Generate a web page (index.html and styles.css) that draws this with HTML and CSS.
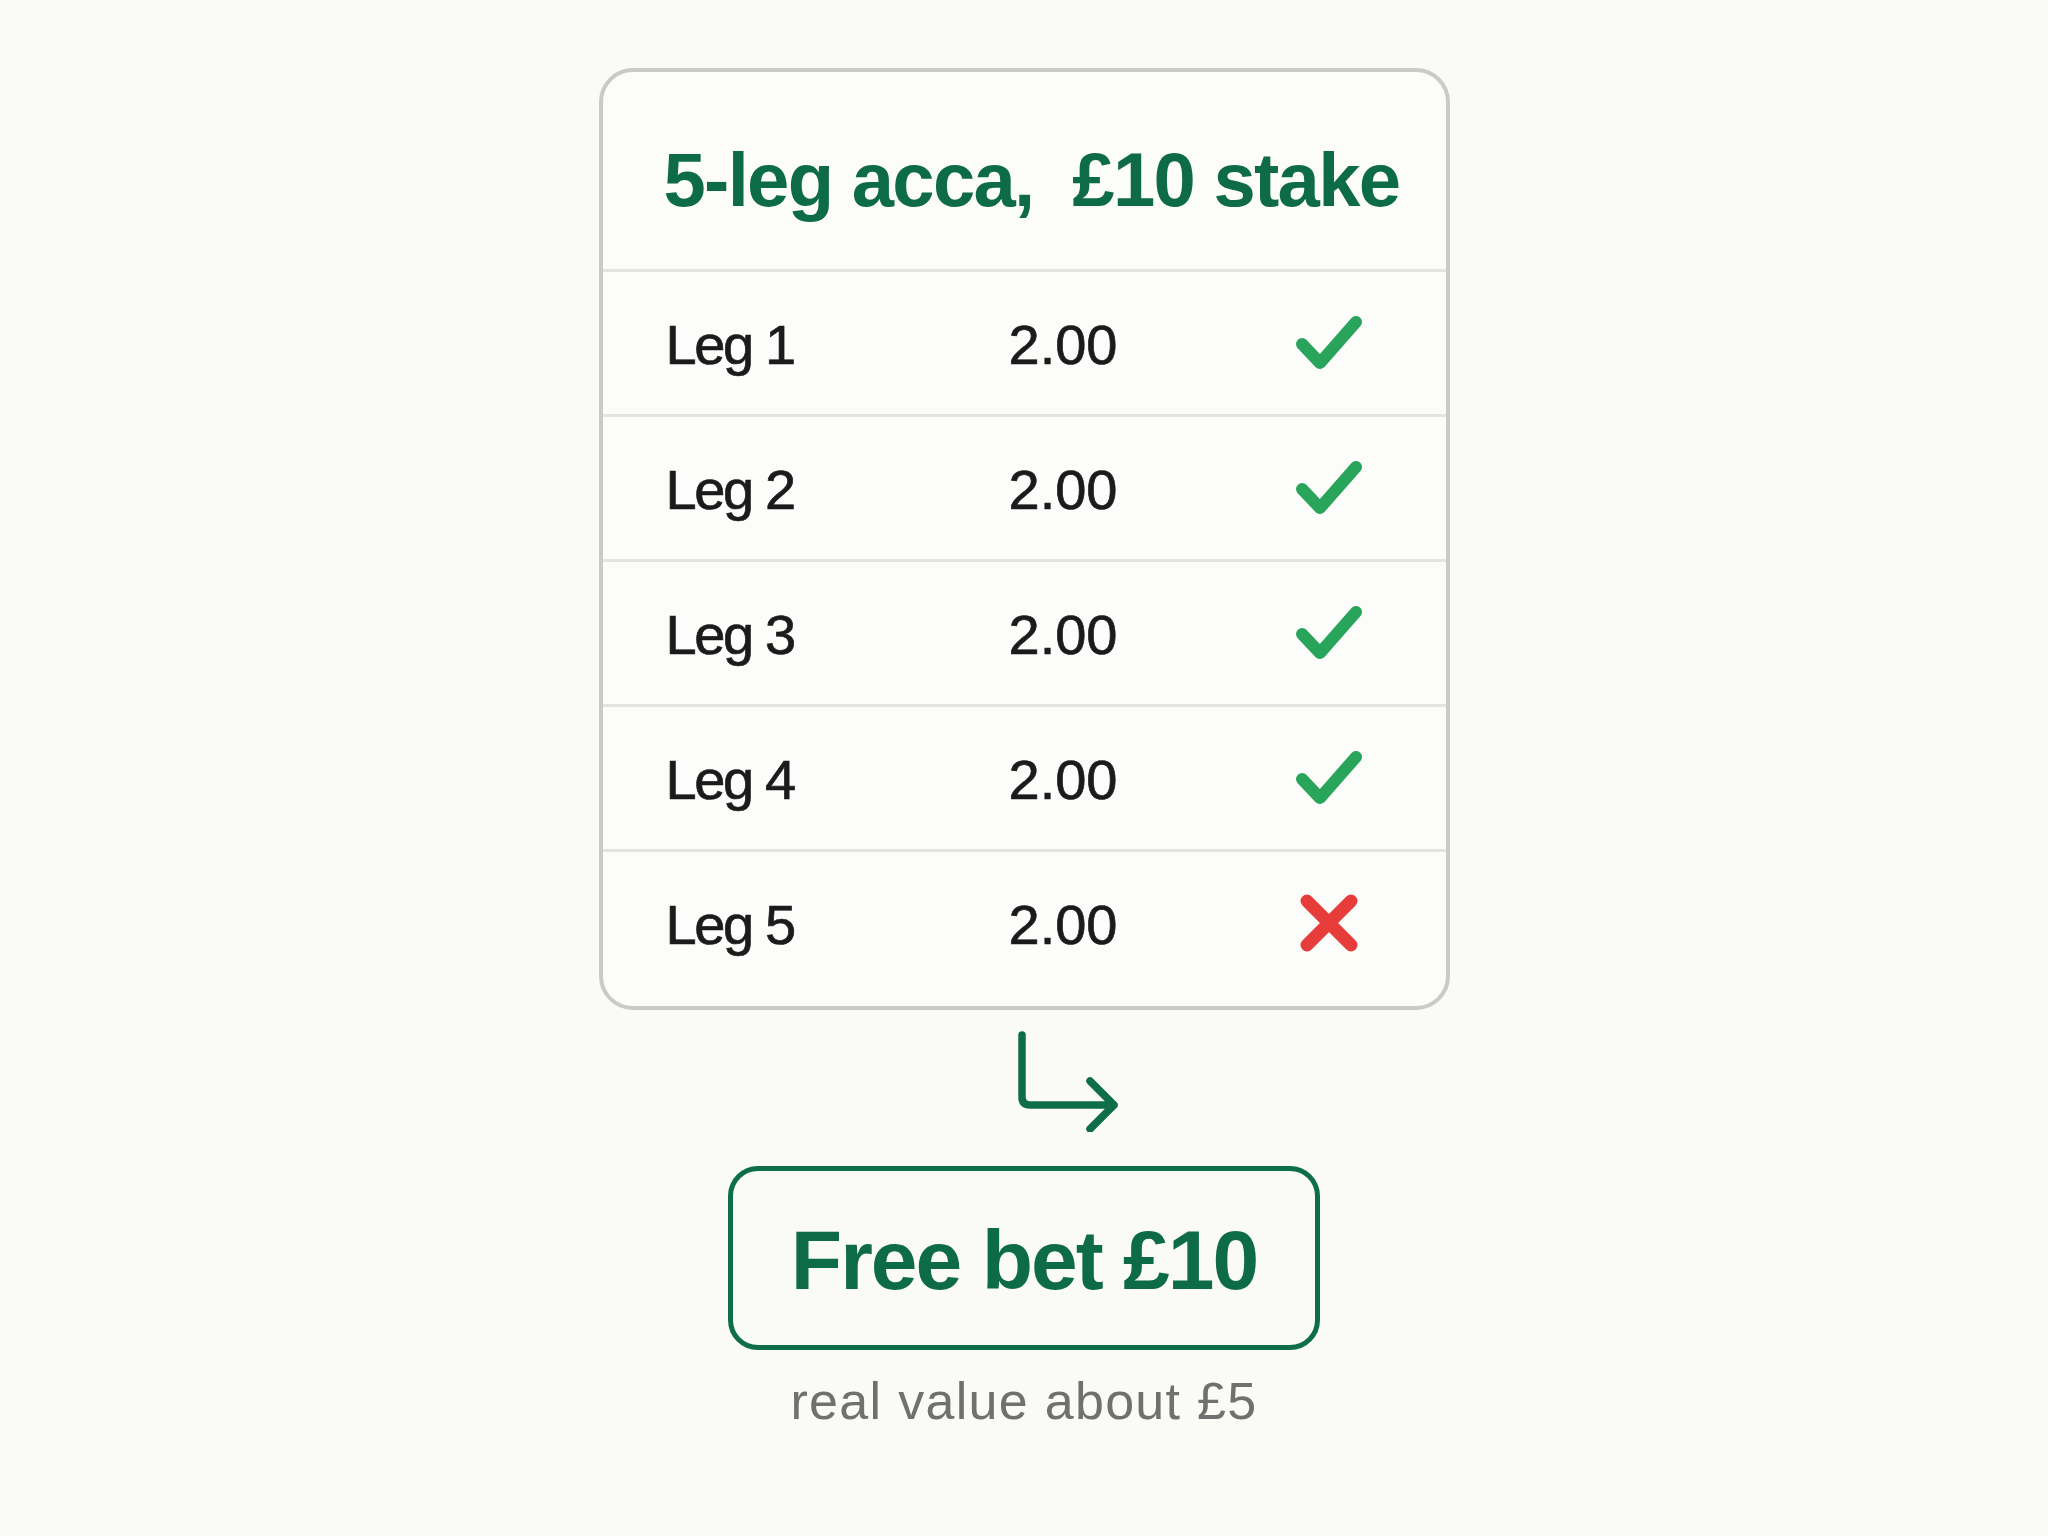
FILE: index.html
```html
<!DOCTYPE html>
<html lang="en">
<head>
<meta charset="utf-8">
<title>5-leg acca</title>
<link rel="stylesheet" href="styles.css">
</head>
<body>
<main class="page">
  <section class="card">
    <header class="card-head">
      <h1 class="title">5-leg acca,&nbsp; £10 stake</h1>
    </header>
    <div class="row">
      <span class="leg">Leg 1</span><span class="odds">2.00</span>
      <svg class="icon" viewBox="0 0 72 60" width="72" height="60"><path class="tick" d="M9 31 L27 50 L63 9"/></svg>
    </div>
    <div class="row">
      <span class="leg">Leg 2</span><span class="odds">2.00</span>
      <svg class="icon" viewBox="0 0 72 60" width="72" height="60"><path class="tick" d="M9 31 L27 50 L63 9"/></svg>
    </div>
    <div class="row">
      <span class="leg">Leg 3</span><span class="odds">2.00</span>
      <svg class="icon" viewBox="0 0 72 60" width="72" height="60"><path class="tick" d="M9 31 L27 50 L63 9"/></svg>
    </div>
    <div class="row">
      <span class="leg">Leg 4</span><span class="odds">2.00</span>
      <svg class="icon" viewBox="0 0 72 60" width="72" height="60"><path class="tick" d="M9 31 L27 50 L63 9"/></svg>
    </div>
    <div class="row">
      <span class="leg">Leg 5</span><span class="odds">2.00</span>
      <svg class="icon" viewBox="0 0 72 60" width="72" height="60"><path class="cross" d="M14 8 L58 52 M58 8 L14 52"/></svg>
    </div>
  </section>

  <div class="arrow-wrap">
    <svg class="arrow" viewBox="0 0 120 110" width="120" height="110"><path d="M12 13 V75 Q12 83 20 83 H104 M80 59 L104 83 L80 107"/></svg>
  </div>

  <div class="result">Free bet £10</div>
  <p class="note">real value about £5</p>
</main>
</body>
</html>
```

FILE: styles.css
```css
html, body {
  margin: 0;
  padding: 0;
  background: #fafaf7;
}

.page {
  display: flex;
  flex-direction: column;
  align-items: center;
  padding-top: 68px;
  font-family: "Liberation Sans", Arial, sans-serif;
}

.card {
  width: 851px;
  box-sizing: border-box;
  border: 4px solid #cacac6;
  border-radius: 34px;
  background: #fcfcfa;
  padding-bottom: 12px;
}

.card-head {
  height: 197px;
  box-sizing: border-box;
  display: flex;
  align-items: center;
  padding: 18px 0 0 61px;
}

.title {
  margin: 0;
  font-size: 76px;
  font-weight: 700;
  letter-spacing: -1.7px;
  color: #0e6b48;
  line-height: 1;
}

.row {
  display: grid;
  grid-template-columns: 343px 284px 72px;
  align-items: center;
  height: 142px;
  padding-left: 63px;
  border-top: 3px solid #e3e3df;
}

.leg, .odds {
  font-size: 56px;
  color: #1b1b1b;
  -webkit-text-stroke: 0.7px #1b1b1b;
  line-height: 1;
  padding-top: 4px;
}

.leg {
  letter-spacing: -2.4px;
}

.odds {
  letter-spacing: 0;
}

.icon {
  display: block;
}

.tick {
  fill: none;
  stroke: #28a55b;
  stroke-width: 12;
  stroke-linecap: round;
  stroke-linejoin: round;
}

.cross {
  fill: none;
  stroke: #e63d3a;
  stroke-width: 13;
  stroke-linecap: round;
}

.arrow-wrap {
  width: 592px;
  margin-top: 12px;
}

.arrow {
  display: block;
  margin-left: 282px;
}

.arrow path {
  fill: none;
  stroke: #0f6e4a;
  stroke-width: 7.5;
  stroke-linecap: round;
  stroke-linejoin: round;
}

.result {
  margin-top: 34px;
  width: 592px;
  height: 184px;
  box-sizing: border-box;
  border: 5px solid #0f6e4a;
  border-radius: 30px;
  display: flex;
  align-items: center;
  justify-content: center;
  font-size: 84px;
  font-weight: 700;
  color: #0e6b48;
  letter-spacing: -2px;
  padding-top: 4px;
}

.note {
  margin: 20px 0 0;
  font-size: 52px;
  line-height: 1.2;
  color: #707070;
  letter-spacing: 1.3px;
}
```
